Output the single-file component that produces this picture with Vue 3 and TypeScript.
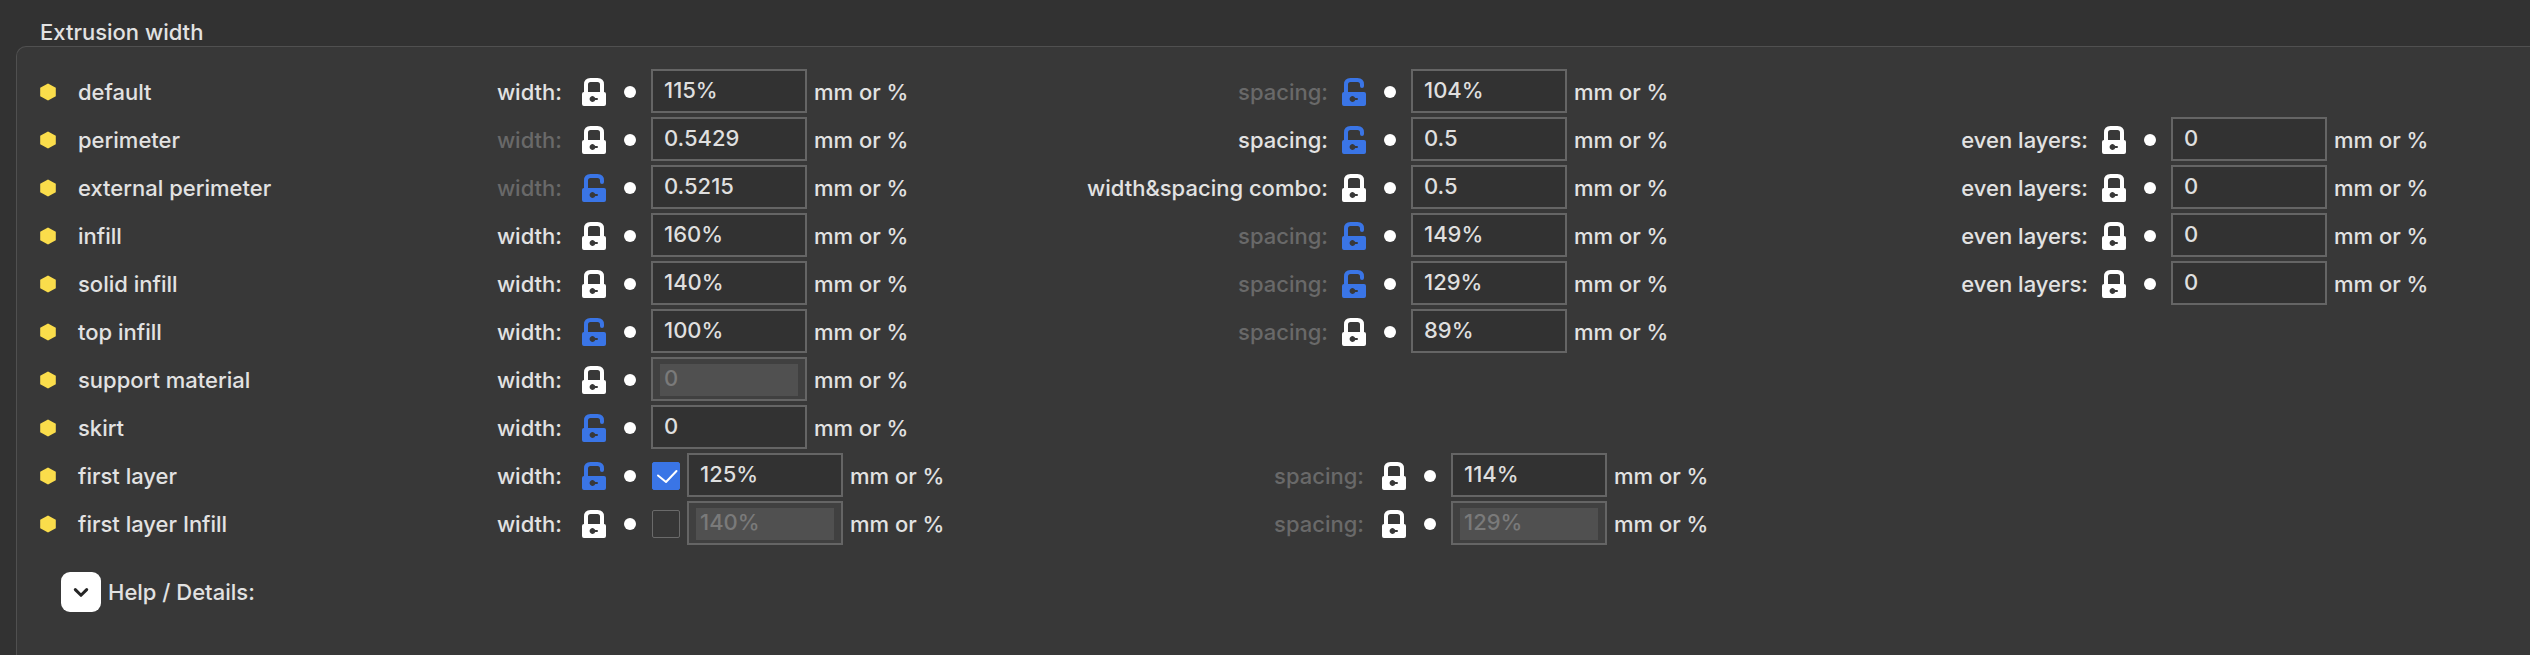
<script setup lang="ts">
import { reactive, ref } from 'vue'

interface Field {
  label: string
  value: string
  locked: boolean
  muted?: boolean
  disabled?: boolean
  enabled?: boolean
}

interface Row {
  name: string
  width: Field
  spacing?: Field
  even?: Field
  wide?: boolean
}

const even = (): Field => ({ label: 'even layers:', value: '0', locked: true })

const rows = reactive<Row[]>([
  {
    name: 'default',
    width: { label: 'width:', value: '115%', locked: true },
    spacing: { label: 'spacing:', value: '104%', locked: false, muted: true },
  },
  {
    name: 'perimeter',
    width: { label: 'width:', value: '0.5429', locked: true, muted: true },
    spacing: { label: 'spacing:', value: '0.5', locked: false },
    even: even(),
  },
  {
    name: 'external perimeter',
    width: { label: 'width:', value: '0.5215', locked: false, muted: true },
    spacing: { label: 'width&spacing combo:', value: '0.5', locked: true },
    even: even(),
  },
  {
    name: 'infill',
    width: { label: 'width:', value: '160%', locked: true },
    spacing: { label: 'spacing:', value: '149%', locked: false, muted: true },
    even: even(),
  },
  {
    name: 'solid infill',
    width: { label: 'width:', value: '140%', locked: true },
    spacing: { label: 'spacing:', value: '129%', locked: false, muted: true },
    even: even(),
  },
  {
    name: 'top infill',
    width: { label: 'width:', value: '100%', locked: false },
    spacing: { label: 'spacing:', value: '89%', locked: true, muted: true },
  },
  {
    name: 'support material',
    width: { label: 'width:', value: '0', locked: true, disabled: true },
  },
  {
    name: 'skirt',
    width: { label: 'width:', value: '0', locked: false },
  },
  {
    name: 'first layer',
    wide: true,
    width: { label: 'width:', value: '125%', locked: false, enabled: true },
    spacing: { label: 'spacing:', value: '114%', locked: true, muted: true },
  },
  {
    name: 'first layer Infill',
    wide: true,
    width: { label: 'width:', value: '140%', locked: true, enabled: false, disabled: true },
    spacing: { label: 'spacing:', value: '129%', locked: true, muted: true, disabled: true },
  },
])

const keys = ['width', 'spacing', 'even'] as const
const helpOpen = ref(false)

function fieldsOf(row: Row) {
  return keys.flatMap((key) => {
    const field = row[key]
    return field ? [{ key, field }] : []
  })
}

function toggle(row: Row, field: Field) {
  field.disabled = !field.enabled
  if (row.spacing) row.spacing.disabled = !field.enabled
}
</script>

<template>
  <main class="page">
    <h2 class="title">Extrusion width</h2>
    <section class="panel">
      <div v-for="(row, i) in rows" :key="row.name" class="row" :class="{ wide: row.wide }">
        <div class="name">
          <svg class="hex" viewBox="0 0 16 18" aria-hidden="true">
            <path d="M8 0.4 L15.8 4.7 V13.3 L8 17.6 L0.2 13.3 V4.7 Z" />
          </svg>
          <span>{{ row.name }}</span>
        </div>
        <div v-for="{ key, field } in fieldsOf(row)" :key="key" class="field" :class="key">
          <label class="label" :class="{ muted: field.muted }" :for="`${key}-${i}`">{{ field.label }}</label>
          <button
            type="button"
            class="lock"
            :class="{ open: !field.locked }"
            :aria-label="`${row.name} ${field.label} ${field.locked ? 'system value' : 'changed value'}`"
            @click="field.locked = true"
          >
            <svg viewBox="0 0 24 28" aria-hidden="true">
              <path v-if="field.locked" class="shackle" d="M4 16 V6.5 Q4 2 8.5 2 H15.5 Q20 2 20 6.5 V16" />
              <path v-else class="shackle" d="M4 16 V6.5 Q4 2 8.5 2 H15.5 Q20 2 20 6.5 V8" />
              <path
                class="body"
                fill-rule="evenodd"
                d="M2 14 H22 Q24 14 24 16 V26 Q24 28 22 28 H2 Q0 28 0 26 V16 Q0 14 2 14 Z M13.2 20 A2.9 2.9 0 1 0 13.2 22 H15 Q16 22 16 21 Q16 20 15 20 Z"
              />
            </svg>
          </button>
          <span class="dot"></span>
          <input
            v-if="field.enabled !== undefined"
            v-model="field.enabled"
            type="checkbox"
            class="check"
            :aria-label="`Enable ${row.name} width`"
            @change="toggle(row, field)"
          />
          <input :id="`${key}-${i}`" v-model="field.value" type="text" class="value" :disabled="field.disabled" />
          <span class="unit">mm or %</span>
        </div>
      </div>
      <div class="help">
        <button
          type="button"
          class="expand"
          aria-labelledby="help-label"
          :aria-expanded="helpOpen"
          @click="helpOpen = !helpOpen"
        >
          <svg viewBox="0 0 40 40" aria-hidden="true">
            <path d="M14.3 17.6 L20 23.3 L25.7 17.6" />
          </svg>
        </button>
        <span id="help-label">Help / Details:</span>
      </div>
    </section>
  </main>
</template>

<style>
body {
  margin: 0;
  background: #323232;
}
</style>

<style scoped>
.page {
  box-sizing: border-box;
  display: flex;
  flex-direction: column;
  min-height: 100vh;
  padding: 18px 0 0 16px;
  background: #323232;
  color: #e2e2e2;
  font: 500 22px/28px Inter, "Liberation Sans", sans-serif;
  white-space: nowrap;
}

.title {
  margin: 0;
  padding-left: 24px;
  font: inherit;
}

.panel {
  flex: 1;
  padding-top: 21px;
  border: 1px solid #505050;
  border-width: 1px 0 0 1px;
  border-top-left-radius: 10px;
  background: #383838;
}

.row {
  display: grid;
  grid-template-columns: 299px 760fr 760fr 694fr;
  align-items: center;
  height: 48px;
}

.name {
  display: flex;
  align-items: center;
  gap: 22px;
  padding-left: 23px;
}

.hex {
  width: 16px;
  height: 18px;
  fill: #fadd4b;
}

.field {
  display: flex;
  align-items: center;
}

.label {
  box-sizing: border-box;
  width: 266px;
  padding-right: 14px;
  text-align: right;
}

.width .label {
  padding-right: 20px;
}

.wide .spacing .label {
  width: 306px;
  padding-right: 18px;
}

.muted {
  color: #696969;
}

.lock {
  width: 24px;
  height: 28px;
  padding: 0;
  border: 0;
  background: none;
  color: #fff;
}

.lock.open {
  color: #3a75e6;
}

.lock svg,
.expand svg {
  display: block;
}

.shackle {
  fill: none;
  stroke: currentColor;
  stroke-width: 4;
  stroke-linecap: round;
}

.body {
  fill: currentColor;
}

.dot {
  width: 12px;
  height: 12px;
  margin: 0 15px 0 18px;
  border-radius: 50%;
  background: #fff;
}

.check {
  box-sizing: border-box;
  width: 28px;
  height: 28px;
  margin: 0 7px 0 1px;
  appearance: none;
  border: 1px solid #6a6a6a;
  border-radius: 2px;
  background: #373737;
}

.check:checked {
  border-color: #3a75e6;
  background: #3a75e6
    url("data:image/svg+xml,%3Csvg xmlns='http://www.w3.org/2000/svg' viewBox='0 0 26 26'%3E%3Cpath d='M5 12.5 L13 19 L23.5 8' fill='none' stroke='white' stroke-width='2' stroke-linecap='round' stroke-linejoin='round'/%3E%3C/svg%3E");
}

.value {
  box-sizing: border-box;
  width: 156px;
  height: 44px;
  margin: 0 0 2px;
  padding: 0 11px 3px;
  border: 2px solid #656565;
  border-radius: 0;
  background: #323232;
  color: #dfdfdf;
  font: inherit;
}

.value:disabled {
  background: linear-gradient(#505050, #505050) 7px 5px / calc(100% - 14px) 32px no-repeat #404040;
  color: #7a7a7a;
}

.unit {
  margin-left: 7px;
}

.help {
  display: flex;
  align-items: center;
  gap: 7px;
  margin-top: 24px;
  padding-left: 44px;
}

.expand {
  width: 40px;
  height: 40px;
  padding: 0;
  border: 0;
  border-radius: 9px;
  background: #fff;
}

.expand path {
  fill: none;
  stroke: #262626;
  stroke-width: 3;
  stroke-linecap: round;
  stroke-linejoin: round;
}
</style>
